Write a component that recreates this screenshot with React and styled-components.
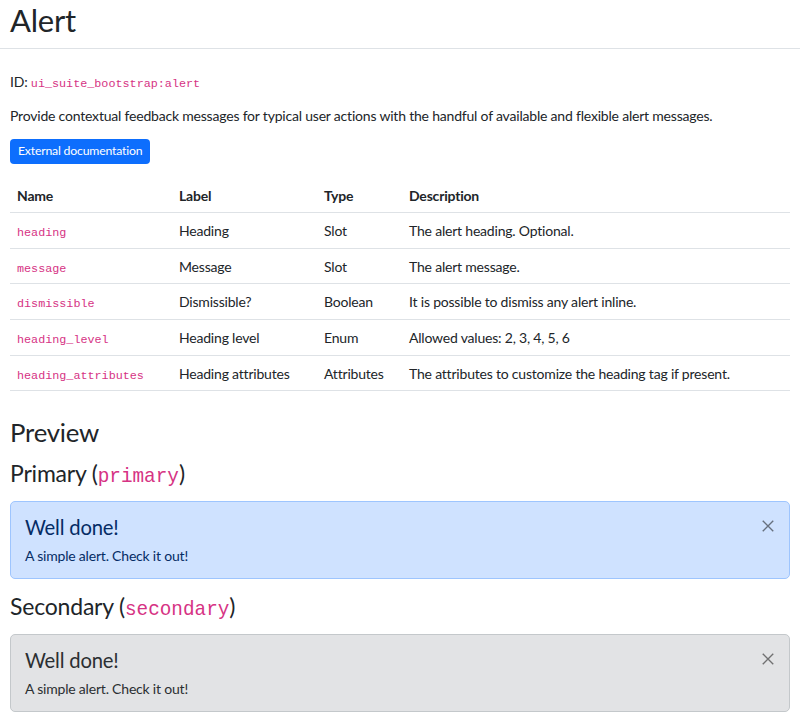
import React from "react";
import styled, { createGlobalStyle } from "styled-components";

const Global = createGlobalStyle`
  html, body { margin: 0; padding: 0; background: #fff; }
  body {
    font-family: Lato, "Liberation Sans", sans-serif;
    font-size: 14px;
    line-height: 1.5;
    letter-spacing: -0.2px;
    color: #212529;
  }
  * { box-sizing: border-box; }
`;

const Page = styled.div`
  padding: 0 10px 14px;
`;

const Title = styled.h1`
  margin: 0 -10px 22px;
  padding: 2px 10px 9px;
  font-size: 31px;
  font-weight: 400;
  line-height: 1.2;
  border-bottom: 1px solid #dee2e6;
`;

const Para = styled.p`
  margin: 0 0 13px;
`;

const Code = styled.code`
  font-family: "Liberation Mono", monospace;
  font-size: 0.84em;
  line-height: 1;
  letter-spacing: 0;
  color: #d63384;
`;

const Button = styled.a`
  display: inline-block;
  background: #0d6efd;
  color: #fff;
  border-radius: 4px;
  padding: 3.3px 8px;
  font-size: 12.25px;
  line-height: 1.5;
  text-decoration: none;
  vertical-align: top;
`;

const Table = styled.table`
  width: 100%;
  border-collapse: collapse;
  margin: 14px 0;
`;

const Th = styled.th`
  text-align: left;
  font-weight: 700;
  padding: 7px 7px 6px;
  border-bottom: 1px solid #dee2e6;
  width: ${(p) => p.$w || "auto"};
`;

const Td = styled.td`
  padding: 7px 7px 6.6px;
  border-bottom: 1px solid #dee2e6;
`;

const H2 = styled.h2`
  margin: 26px 0 12px;
  font-size: 25.75px;
  font-weight: 400;
  line-height: 1.2;
`;

const H3 = styled.h3`
  margin: 0 0 13px;
  font-size: 23px;
  font-weight: 400;
  line-height: 1.2;
`;

const variants = {
  primary: { bg: "#cfe2ff", border: "#9ec5fe", color: "#052c65" },
  secondary: { bg: "#e2e3e5", border: "#c4c8cb", color: "#2b2f32" },
};

const AlertBox = styled.div`
  position: relative;
  background: ${(p) => variants[p.$v].bg};
  border: 1px solid ${(p) => variants[p.$v].border};
  color: ${(p) => variants[p.$v].color};
  border-radius: 5px;
  padding: 13px 42px 12px 14px;
  margin-bottom: 14px;
`;

const AlertHeading = styled.h4`
  margin: 0 0 6px;
  font-size: 20.25px;
  font-weight: 400;
  line-height: 1.2;
  color: inherit;
`;

const AlertText = styled.p`
  margin: 0;
`;

const Close = styled.button`
  position: absolute;
  top: 0;
  right: 0;
  padding: 17px 14px;
  background: none;
  border: 0;
  opacity: 0.5;
  color: #000;
  cursor: pointer;
  display: flex;
`;

const rows = [
  ["heading", "Heading", "Slot", "The alert heading. Optional."],
  ["message", "Message", "Slot", "The alert message."],
  ["dismissible", "Dismissible?", "Boolean", "It is possible to dismiss any alert inline."],
  ["heading_level", "Heading level", "Enum", "Allowed values: 2, 3, 4, 5, 6"],
  ["heading_attributes", "Heading attributes", "Attributes", "The attributes to customize the heading tag if present."],
];

function Alert({ v }) {
  return (
    <AlertBox $v={v}>
      <AlertHeading>Well done!</AlertHeading>
      <AlertText>A simple alert. Check it out!</AlertText>
      <Close aria-label="Close">
        <svg width="14" height="14" viewBox="0 0 16 16">
          <path d="M2 2L14 14M14 2L2 14" stroke="#000" strokeWidth="1.6" fill="none" />
        </svg>
      </Close>
    </AlertBox>
  );
}

export default function App() {
  return (
    <>
      <Global />
      <Page>
        <Title>Alert</Title>
        <Para>
          ID: <Code>ui_suite_bootstrap:alert</Code>
        </Para>
        <Para>
          Provide contextual feedback messages for typical user actions with the handful of available and flexible alert messages.
        </Para>
        <Button href="#">External documentation</Button>
        <Table>
          <thead>
            <tr>
              <Th $w="162px">Name</Th>
              <Th $w="145px">Label</Th>
              <Th $w="85px">Type</Th>
              <Th>Description</Th>
            </tr>
          </thead>
          <tbody>
            {rows.map((r) => (
              <tr key={r[0]}>
                <Td><Code>{r[0]}</Code></Td>
                <Td>{r[1]}</Td>
                <Td>{r[2]}</Td>
                <Td>{r[3]}</Td>
              </tr>
            ))}
          </tbody>
        </Table>
        <H2>Preview</H2>
        <H3>Primary (<Code>primary</Code>)</H3>
        <Alert v="primary" />
        <H3>Secondary (<Code>secondary</Code>)</H3>
        <Alert v="secondary" />
      </Page>
    </>
  );
}
